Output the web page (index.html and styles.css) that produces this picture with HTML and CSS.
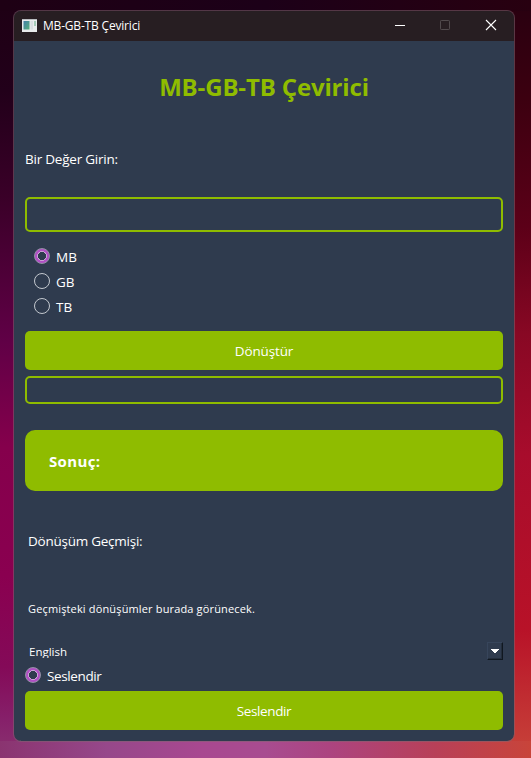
FILE: index.html
```html
<!DOCTYPE html>
<html lang="tr">
<head>
<meta charset="utf-8">
<title>MB-GB-TB Çevirici</title>
<link rel="stylesheet" href="styles.css">
</head>
<body>
<main class="window">
  <header class="titlebar">
    <svg class="app-icon" width="15" height="13" viewBox="0 0 15 13">
      <defs><linearGradient id="pane" x1="0" y1="0" x2="1" y2="1"><stop offset="0" stop-color="#4580a8"/><stop offset="1" stop-color="#55b07c"/></linearGradient></defs>
      <rect width="15" height="13" fill="#e9ebec"/>
      <rect width="15" height="1" fill="#b9bdc0"/>
      <rect x="1.5" y="2" width="6" height="8.5" fill="url(#pane)"/>
      <rect x="8.5" y="2" width="2.5" height="8.5" fill="#d8dde0"/>
      <rect x="12" y="2" width="2" height="5" fill="#a5cbb8"/>
    </svg>
    <span class="titlebar-text">MB-GB-TB Çevirici</span>
    <svg class="controls" width="110" height="14" viewBox="0 0 110 14" fill="none">
      <path d="M3 7.5H13" stroke="#fff"/>
      <rect x="48.5" y="2.5" width="9" height="9" rx=".7" stroke="#514a4d"/>
      <path d="M94 2L104 12M104 2L94 12" stroke="#fff" stroke-width="1.1"/>
    </svg>
  </header>
  <section class="content">
    <h1 class="heading">MB-GB-TB Çevirici</h1>
    <label class="value-label" for="value">Bir Değer Girin:</label>
    <input class="field" id="value" type="text">
    <div class="units">
      <label class="option"><input class="radio" type="radio" name="unit" checked><span>MB</span></label>
      <label class="option"><input class="radio" type="radio" name="unit"><span>GB</span></label>
      <label class="option"><input class="radio" type="radio" name="unit"><span>TB</span></label>
    </div>
    <button class="button">Dönüştür</button>
    <input class="field field-small" type="text">
    <div class="result">Sonuç:</div>
    <h2 class="history-title">Dönüşüm Geçmişi:</h2>
    <p class="history">Geçmişteki dönüşümler burada görünecek.</p>
    <div class="combo">
      <span class="combo-text">English</span>
      <span class="combo-button"><svg width="8" height="4" viewBox="0 0 8 4" shape-rendering="crispEdges"><path d="M0 0H8V1H7V2H6V3H5V4H3V3H2V2H1V1H0Z" fill="#fff"/></svg></span>
    </div>
    <label class="option speak"><input class="radio" type="radio" name="speak" checked><span>Seslendir</span></label>
    <button class="button button-speak">Seslendir</button>
  </section>
</main>
</body>
</html>
```
FILE: styles.css
```css
* { box-sizing: border-box; }

body {
  margin: 0;
  height: 758px;
  padding: 10px 16px 16px 13px;
  overflow: hidden;
  font-family: "Open Sans", "Noto Sans", sans-serif;
  font-size: 13.5px;
  color: #fff;
  background:
    linear-gradient(90deg, #8a3470, #96488a 20%, #a84890 38%, #a84c90 50%, #ac4480 62%, #b84058 82%, #c8443a) 0 100% / 100% 17px no-repeat,
    linear-gradient(90deg, #1e0014, #1c0018 50%, #280010) 0 0 / 100% 11px no-repeat,
    linear-gradient(#1e0014, #22001a 12%, #3a0028 26%, #600046 45%, #85004c 59%, #8a0050 76%, #840a58 88%, #86206a 95%, #8a3470) 0 0 / 20px 100% no-repeat,
    linear-gradient(#280010, #3c0010 13%, #5c0018 30%, #880824 44%, #a80c2c 60%, #b81228 83%, #c8443a) 100% 0 / 24px 100% no-repeat;
}

.window {
  width: 502px;
  height: 732px;
  border: 1px solid rgba(128, 100, 112, .55);
  border-radius: 8px;
  background: #2f3b4e;
  background-clip: padding-box;
  overflow: hidden;
}

.titlebar {
  display: flex;
  align-items: center;
  height: 30px;
  padding: 0 12px 0 8px;
  background: #271e22;
}
.app-icon { margin-top: -2px; }
.titlebar-text {
  flex: 1;
  margin: -2px 0 0 6px;
  font-size: 12px;
  letter-spacing: -.19px;
  white-space: nowrap;
}
.controls { margin-top: -2px; }

.content {
  display: flex;
  flex-direction: column;
  padding: 0 11px;
  white-space: nowrap;
}

.heading {
  margin: 32px 0 0;
  height: 28px;
  line-height: 28px;
  font-size: 24px;
  font-weight: 700;
  letter-spacing: -.15px;
  text-align: center;
  color: #8fbc00;
}
.value-label { margin-top: 48px; height: 20px; line-height: 20px; letter-spacing: -.22px; }

.field {
  width: 100%;
  height: 35px;
  margin: 28px 0 0;
  padding: 0 8px;
  border: 2px solid #8fbc00;
  border-radius: 5px;
  background: transparent;
  color: #fff;
  font: inherit;
  outline: 0;
}
.field-small { height: 28px; margin-top: 6px; }

.units { margin: 12px 0 13px 9px; height: 74px; }
.option { display: flex; align-items: center; gap: 6px; height: 25px; line-height: 20px; }

.radio {
  appearance: none;
  width: 16px;
  height: 16px;
  margin: 0 0 1px;
  border: 1px solid #c3c8ce;
  border-radius: 50%;
}
.radio:checked {
  border-color: #9590a8;
  background: radial-gradient(circle, #2f3b4e 0 3.8px, #c9a3d6 4.2px 4.7px, #b14fc4 5.1px);
}

.button {
  height: 39px;
  padding: 0;
  border: 0;
  border-radius: 5px;
  background: #8fbc00;
  color: #fff;
  font: inherit;
  letter-spacing: -.15px;
}
.result {
  display: flex;
  align-items: center;
  height: 61px;
  margin-top: 26px;
  padding-left: 24px;
  border-radius: 10px;
  background: #8fbc00;
  font-size: 15px;
  font-weight: 700;
  letter-spacing: .35px;
}
.history-title {
  margin: 40px 0 0 3px;
  height: 20px;
  line-height: 20px;
  font-size: 13.5px;
  font-weight: 400;
  letter-spacing: -.25px;
}
.history { margin: 49px 0 0 3px; height: 18px; line-height: 18px; font-size: 11px; letter-spacing: .15px; }
.combo { display: flex; justify-content: space-between; height: 18px; margin-top: 24px; padding-left: 4px; font-size: 11.5px; }
.combo-text { height: 16px; line-height: 19px; overflow: hidden; }
.combo-button {
  display: flex;
  align-items: center;
  justify-content: center;
  width: 16px;
  height: 18px;
  border: 1px solid #37455b;
  border-right-color: #101720;
  border-bottom-color: #101720;
  box-shadow: inset -1px -1px #232d3b;
}
.speak { margin: 3px 0; letter-spacing: -.38px; }
.button-speak { letter-spacing: -.38px; }
```
